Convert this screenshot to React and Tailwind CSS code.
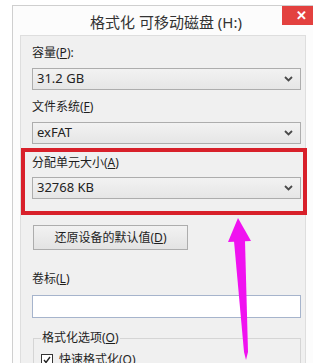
const Chevron = () => (
  <svg width="9" height="6" viewBox="0 0 9 6" className="shrink-0">
    <polyline points="1,1 4.5,4.5 8,1" fill="none" stroke="#4a4a4a" strokeWidth="1.8" />
  </svg>
);

const Select = ({ value }) => (
  <div className="h-[22px] flex items-center justify-between pl-[4px] pr-[7px] border border-[#adadad] bg-gradient-to-b from-[#f2f2f2] to-[#e6e6e6] text-[13px] text-[#222]">
    <span>{value}</span>
    <Chevron />
  </div>
);

const Label = ({ children }) => (
  <div className="h-[20px] leading-[20px] text-[12px] text-[#1e1e1e]">{children}</div>
);

export default function App() {
  return (
    <div
      className="relative w-[313px] h-[363px] overflow-hidden bg-white"
      style={{ fontFamily: '"Noto Sans", "Noto Sans CJK SC", sans-serif' }}
    >
      <div className="relative ml-[12px] mt-[5px] w-[307px] h-[360px] border-l border-t border-[#cfcfcf] bg-[#fcfcfc]">
        {/* title bar */}
        <div className="h-[29px] flex items-center justify-center pt-[3px] text-[15px] text-[#333]">
          格式化 可移动磁盘 (H:)
        </div>
        <div className="absolute top-0 left-[269px] w-[38px] h-[19px] bg-[#e3413f] flex items-center justify-center text-white text-[13px] font-bold leading-none">
          ✕
        </div>

        {/* content panel */}
        <div className="ml-[7px] w-[286px] h-[340px] border border-[#dedede] bg-[#f0f0f0] pt-[7px] pl-[11px] pr-[4px]">
          <Label>
            容量(<span className="underline">P</span>):
          </Label>
          <div className="mt-[5px]">
            <Select value="31.2 GB" />
          </div>

          <div className="mt-[7px]">
            <Label>
              文件系统(<span className="underline">F</span>)
            </Label>
          </div>
          <div className="mt-[5px]">
            <Select value="exFAT" />
          </div>

          <div className="mt-[4px] -ml-[11px] -mr-[6px] border-4 border-[#d8202a] pt-[1px] pl-[7px] pr-[2px] pb-[12px]">
            <Label>
              分配单元大小(<span className="underline">A</span>)
            </Label>
            <div className="mt-[4px]">
              <Select value="32768 KB" />
            </div>
          </div>

          <div className="mt-[10px] ml-[1px] w-[155px] h-[25px] border border-[#adadad] bg-gradient-to-b from-[#f2f2f2] to-[#e3e3e3] flex items-center justify-center text-[12px] text-[#1e1e1e]">
            还原设备的默认值(<span className="underline">D</span>)
          </div>

          <div className="mt-[19px]">
            <Label>
              卷标(<span className="underline">L</span>)
            </Label>
          </div>
          <div className="mt-[6px] h-[23px] border border-[#a6b4cc] bg-white" />

          <fieldset className="mt-[10px] ml-[1px] border border-[#d5d5d5] pl-[7px] pb-[10px] min-h-[40px]">
            <legend className="px-[1px] h-[20px] leading-[20px] text-[12px] text-[#1e1e1e]">
              格式化选项(<span className="underline">O</span>)
            </legend>
            <div className="mt-[3px] flex items-center gap-[6px] text-[12px] text-[#1e1e1e]">
              <div className="w-[12px] h-[12px] border border-[#333] bg-white flex items-center justify-center">
                <svg width="8" height="8" viewBox="0 0 8 8">
                  <polyline points="1,4 3,6.5 7,1" fill="none" stroke="#222" strokeWidth="1.4" />
                </svg>
              </div>
              <span>快速格式化(<span className="underline">Q</span>)</span>
            </div>
          </fieldset>
        </div>
      </div>

      {/* annotation arrow */}
      <svg className="absolute inset-0 pointer-events-none" width="313" height="363" viewBox="0 0 313 363">
        <polygon points="238,218 251,241 228,242" fill="#f012f0" />
        <polygon points="234,241 245,241 248,352 246,360 244,352" fill="#f012f0" />
      </svg>
    </div>
  );
}
